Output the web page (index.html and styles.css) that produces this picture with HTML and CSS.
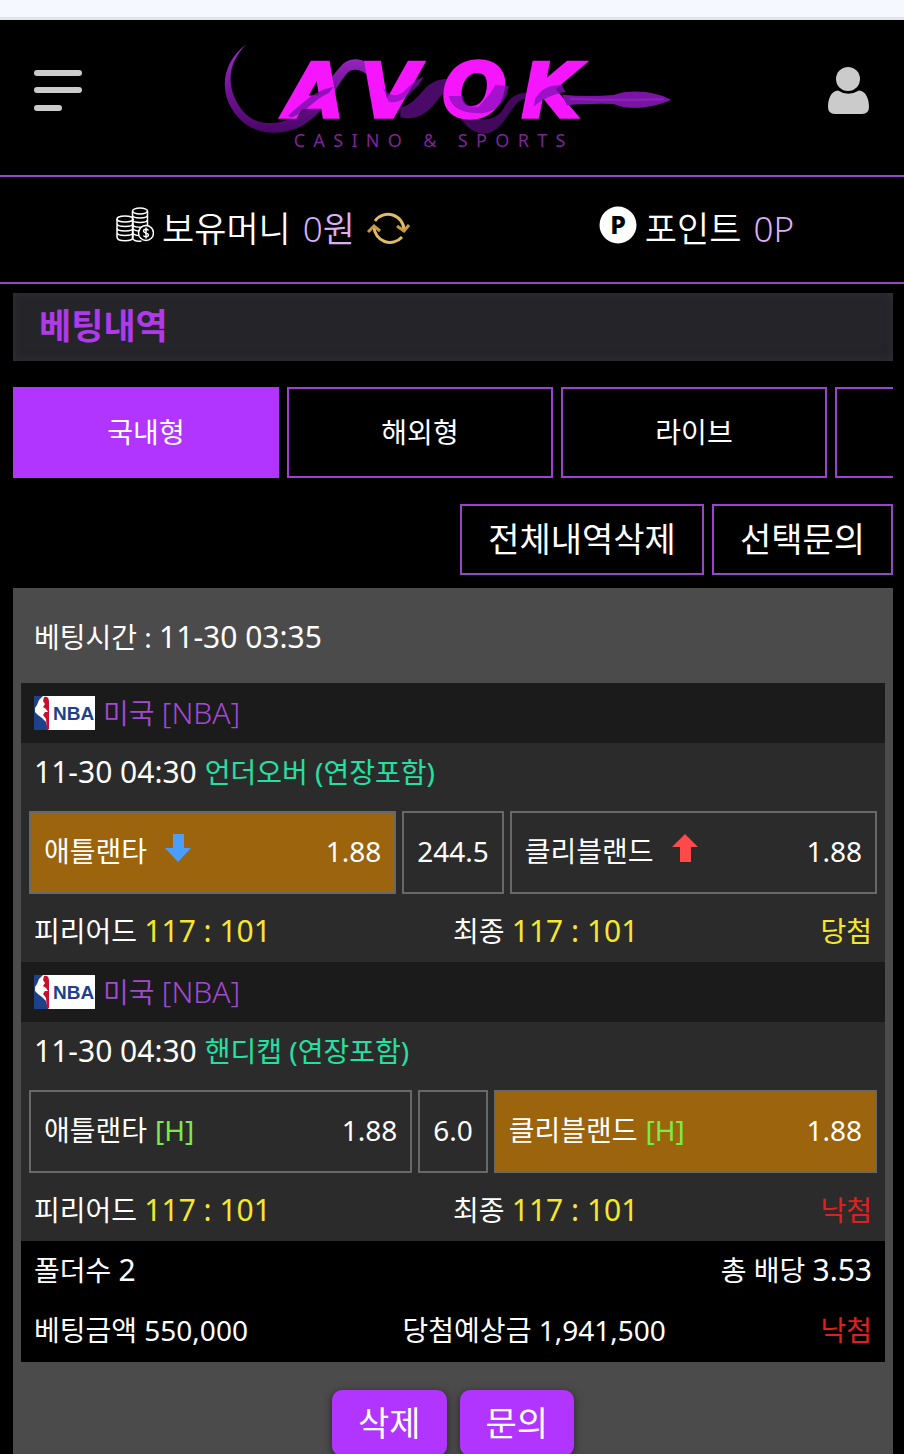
FILE: index.html
```html
<!DOCTYPE html>
<html lang="ko">
  <head>
    <meta charset="UTF-8" />
    <meta name="viewport" content="width=device-width, initial-scale=1.0" />
    <title>베팅내역</title>
    <link rel="stylesheet" href="styles.css">
  </head>
  <body>
    <div class="browser-edge"></div>
    <header>
      <button class="icon-btn" aria-label="메뉴">
        <svg width="48" height="42" viewBox="0 0 48 42" fill="#cbcbcb">
          <rect x="0" y="0" width="48" height="6" rx="3" />
          <rect x="0" y="17" width="48" height="6" rx="3" />
          <rect x="0" y="35" width="28" height="6" rx="3" />
        </svg>
      </button>
      <svg class="logo" width="500" height="141" viewBox="14 -30 1500 423">
        <defs>
          <linearGradient id="tail" x1="0" y1="0" x2="0" y2="1">
            <stop offset="0" stop-color="#a62cd0" />
            <stop offset="0.5" stop-color="#74149a" />
            <stop offset="1" stop-color="#4a0666" />
          </linearGradient>
        </defs>
        <path d="M138 43C60 100 55 195 110 258 155 312 230 322 300 290 370 255 400 180 440 130 460 110 490 120 520 150L515 110C490 85 455 80 430 100 380 150 350 220 290 258 220 292 160 285 125 240 75 175 80 100 138 43z" fill="url(#tail)" />
        <path d="M600 262C650 275 690 245 715 205 735 180 750 185 765 200L770 155C740 140 700 145 670 180 640 215 615 235 600 230z" fill="#4a0a68" />
        <path d="M780 262C800 300 840 320 870 308 910 290 925 245 950 220 965 205 980 205 1000 205V188C960 185 930 195 910 235 895 262 870 270 840 268z" fill="#42085c" />
        <text class="logo-text" y="262" x="256 480 726 964">AVOK</text>
        <path d="M262 258C310 215 345 180 400 170L385 190C345 205 320 245 275 262z" fill="#7c0fae" opacity="0.8" />
        <path d="M545 165C560 195 585 205 610 185 630 165 645 150 670 140L655 165C625 190 605 225 565 215z" fill="#8510b8" opacity="0.7" />
        <path d="M745 198L788 198C790 225 810 232 835 230L870 190 885 165 925 168C915 220 890 245 840 250 785 250 755 235 745 198z" fill="#8510b8" opacity="0.7" />
        <path d="M1005 205C1025 175 1045 165 1085 165L1095 185C1070 190 1025 205 1000 230z" fill="#8510b8" opacity="0.8" />
        <path d="M1085 194Q1160 202 1240 195C1290 175 1370 185 1412 209 1370 230 1290 245 1240 222Q1160 220 1100 226z" fill="#7a14a4" />
        <path d="M1110 206Q1240 212 1390 208" stroke="#9022bc" stroke-width="6" fill="none" />
        <text class="logo-sub" x="280" y="350">CASINO &amp; SPORTS</text>
      </svg>
      <button class="icon-btn" aria-label="내 정보">
        <svg width="41" height="48" viewBox="0 0 41 48" fill="#cbcbcb">
          <circle cx="20" cy="12" r="12" />
          <path d="M10 23.500Q20 30 31 23.500C38 24 41 32 41 40Q41 47 34 47H7Q0 47 0 40C0 32 3 24 10 23.500z" />
        </svg>
      </button>
    </header>

    <div class="wallet">
      <div class="wallet-item">
        <svg class="wallet-icon" width="38" height="36" viewBox="0 0 38 36" fill="none" stroke="#fff" stroke-width="1.500">
          <ellipse cx="9" cy="12" rx="8" ry="3" />
          <ellipse cx="24" cy="4" rx="7.500" ry="3" />
          <path d="M1 12v18c0 5 16 5 16 0V12M1 16.500c0 4 16 4 16 0M1 21c0 4 16 4 16 0M1 25.500c0 4 16 4 16 0" />
          <path d="M16.500 4v27c1 3 5 3.500 9 3M31.500 4v14M16.500 8c0 4 15 4 15 0M16.500 12.500c0 4 15 4 15 0M16.500 17c0 4 12 4 14 1M17 21.500c1 2 4 2.500 7 2.500M17 26c1 2 3 2.500 6 2.500" />
          <circle cx="30" cy="26" r="7.500" fill="#000" />
          <path d="M32.500 23.500c-1 -2 -5 -1.500 -5 0.500 0 2.500 5 1.500 5 4 0 2 -4 2.500 -5 0.500M30 20.500v11" />
        </svg>
        <span>보유머니</span>
        <span class="amount">0원</span>
        <button class="icon-btn" aria-label="새로고침">
          <svg width="43" height="36" viewBox="0 0 43 36" fill="none" stroke="#e0bb66" stroke-width="3">
            <path d="M8 10A16 16 0 0 1 37 19M35 26A16 16 0 0 1 7 16" />
            <path d="M30 15l7 5 5 -6M1 21l6 -6 6 5" stroke="#c99a3e" stroke-width="3" />
          </svg>
        </button>
      </div>
      <div class="wallet-item">
        <svg class="wallet-icon" width="38" height="38" viewBox="0 0 38 38">
          <circle cx="19" cy="19" r="18.500" fill="#fff" />
          <text x="19" y="28" class="point-text">P</text>
        </svg>
        <span>포인트</span>
        <span class="amount">0P</span>
      </div>
    </div>

    <main>
      <h1>베팅내역</h1>

      <div class="tabs">
        <button class="tab active">국내형</button>
        <button class="tab">해외형</button>
        <button class="tab">라이브</button>
        <button class="tab"></button>
      </div>

      <div class="actions">
        <button class="outline-btn">전체내역삭제</button>
        <button class="outline-btn">선택문의</button>
      </div>

      <section class="bet-card">
        <div class="bet-time">베팅시간 : <span class="num">11-30 03:35</span></div>

        <div class="game">
          <div class="league">
            <svg width="61" height="34" viewBox="0 0 61 34">
              <rect width="61" height="34" fill="#fff" />
              <path d="M0 0h9L5 4 3 9 1 12v4l3 3 4 3 4 4 2 8H0z" fill="#1d428a" />
              <path d="M10 1q5 -1 5 5v27q-1 1 -2 1l-1 -11 -3 -4 2 -3 3 0 -2 -3 -3 -2 2 -3 -2 -3z" fill="#c8102e" />
              <text x="19" y="24" class="nba-text">NBA</text>
            </svg>
            <span>미국 <span class="num">[NBA]</span></span>
          </div>
          <div class="row game-title">
            <span class="num">11-30 04:30</span>
            <span class="market">언더오버 (연장포함)</span>
          </div>
          <div class="odds">
            <button class="pick selected">
              <span class="team">애틀랜타
                <svg class="arrow" width="26" height="28" viewBox="0 0 26 28"><path d="M8 0h11v14h7L13 28 0 14h8z" fill="#4a9eff" /></svg>
              </span>
              <span>1.88</span>
            </button>
            <div class="line">244.5</div>
            <button class="pick">
              <span class="team">클리블랜드
                <svg class="arrow" width="26" height="28" viewBox="0 0 26 28"><path d="M13 0l13 13h-7v15H8V13H0z" fill="#ff4a4a" /></svg>
              </span>
              <span>1.88</span>
            </button>
          </div>
          <div class="row result">
            <span>피리어드 <span class="num score">117 : 101</span></span>
            <span>최종 <span class="num score">117 : 101</span></span>
            <span class="win">당첨</span>
          </div>
        </div>

        <div class="game">
          <div class="league">
            <svg width="61" height="34" viewBox="0 0 61 34">
              <rect width="61" height="34" fill="#fff" />
              <path d="M0 0h9L5 4 3 9 1 12v4l3 3 4 3 4 4 2 8H0z" fill="#1d428a" />
              <path d="M10 1q5 -1 5 5v27q-1 1 -2 1l-1 -11 -3 -4 2 -3 3 0 -2 -3 -3 -2 2 -3 -2 -3z" fill="#c8102e" />
              <text x="19" y="24" class="nba-text">NBA</text>
            </svg>
            <span>미국 <span class="num">[NBA]</span></span>
          </div>
          <div class="row game-title">
            <span class="num">11-30 04:30</span>
            <span class="market">핸디캡 (연장포함)</span>
          </div>
          <div class="odds">
            <button class="pick">
              <span class="team">애틀랜타 <span class="handicap">[H]</span></span>
              <span>1.88</span>
            </button>
            <div class="line">6.0</div>
            <button class="pick selected">
              <span class="team">클리블랜드 <span class="handicap">[H]</span></span>
              <span>1.88</span>
            </button>
          </div>
          <div class="row result">
            <span>피리어드 <span class="num score">117 : 101</span></span>
            <span>최종 <span class="num score">117 : 101</span></span>
            <span class="lose">낙첨</span>
          </div>
        </div>

        <div class="summary">
          <div class="row">
            <span>폴더수 <span class="num">2</span></span>
            <span>총 배당 <span class="num">3.53</span></span>
          </div>
          <div class="row">
            <span>베팅금액 550,000</span>
            <span>당첨예상금 1,941,500</span>
            <span class="lose">낙첨</span>
          </div>
        </div>

        <div class="card-actions">
          <button class="fill-btn">삭제</button>
          <button class="fill-btn">문의</button>
        </div>
      </section>
    </main>
  </body>
</html>
```
FILE: styles.css
```css
* {
  box-sizing: border-box;
}
body {
  margin: 0;
  height: 100vh;
  overflow: hidden;
  background-color: #000;
  color: #fff;
  font-family: "Noto Sans", "Noto Sans CJK KR", sans-serif;
  font-size: 28px;
  font-weight: 400;
  line-height: 38px;
}
button {
  font: inherit;
  color: inherit;
  padding: 0;
  border: none;
  background: none;
  cursor: pointer;
  white-space: nowrap;
}
svg {
  display: block;
  flex: none;
}
.browser-edge {
  height: 20px;
  background-color: #f5f9ff;
  border-bottom: 3px solid #dfe6e8;
}

/* header */
header {
  display: flex;
  justify-content: space-between;
  align-items: center;
  height: 157px;
  padding: 0 35px 14px 34px;
  border-bottom: 2px solid #9747c4;
}
.icon-btn {
  display: block;
}
.logo-text {
  font-family: "DejaVu Sans", sans-serif;
  font-size: 226px;
  font-weight: bold;
  font-style: italic;
  fill: #f516ff;
  stroke: #f516ff;
  stroke-width: 10px;
}
.logo-sub {
  font-family: "Noto Sans", sans-serif;
  font-size: 54px;
  font-weight: 400;
  letter-spacing: 25px;
  fill: #7d2499;
}

/* wallet bar */
.wallet {
  display: flex;
  justify-content: space-between;
  align-items: center;
  height: 107px;
  padding: 0 106px 2px 116px;
  border-bottom: 2px solid #9747c4;
  font-size: 35px;
  font-weight: 350;
}
.wallet-item {
  display: flex;
  align-items: center;
  gap: 8px;
}
.wallet-icon {
  margin-bottom: 8px;
}
.amount {
  margin: 0 4px;
  color: #dcaef5;
}
.point-text {
  font-family: "Noto Sans", sans-serif;
  font-size: 25px;
  font-weight: 800;
  text-anchor: middle;
}

/* content */
main {
  padding: 9px 11px 0 13px;
}
h1 {
  height: 68px;
  margin: 0 0 26px;
  padding: 0 26px;
  background-color: #252429;
  box-shadow: inset 0 0 10px #303036;
  color: #ae3aea;
  font-size: 35px;
  font-weight: 700;
  line-height: 66px;
}
.tabs {
  display: flex;
  gap: 8px;
  margin-bottom: 26px;
  overflow: hidden;
}
.tab {
  flex: 0 0 266px;
  height: 91px;
  padding-bottom: 2px;
  border: 2px solid #9f40d0;
}
.tab.active {
  background-color: #b135ff;
  border-color: #b135ff;
}
.actions {
  display: flex;
  justify-content: flex-end;
  gap: 8px;
  margin-bottom: 13px;
}
.outline-btn {
  height: 71px;
  padding: 0 26px 2px;
  border: 2px solid #9747c4;
  font-size: 34px;
}

/* bet card */
.bet-card {
  padding: 0 8px 20px;
  background-color: #4b4b4b;
}
.bet-time {
  height: 95px;
  padding: 30px 13px 0;
}
.num {
  font-size: 30px;
}
.game {
  background-color: #2b2b2b;
}
.league {
  display: flex;
  align-items: center;
  gap: 8px;
  height: 60px;
  padding: 0 13px;
  background-color: #1b1b1b;
  color: #a44ad2;
  font-weight: 350;
}
.nba-text {
  font-family: "Liberation Sans", sans-serif;
  font-size: 19px;
  font-weight: bold;
  fill: #1d428a;
}
.row {
  display: flex;
  justify-content: space-between;
  align-items: center;
  height: 60px;
  padding: 0 13px 2px;
}
.game-title {
  justify-content: flex-start;
  gap: 8px;
}
.market {
  color: #25e0a2;
}
.odds {
  display: flex;
  gap: 6px;
  padding: 8px;
}
.pick,
.line {
  display: flex;
  align-items: center;
  height: 83px;
  padding: 0 13px 4px;
  border: 2px solid #686868;
}
.pick {
  flex: 1;
  justify-content: space-between;
}
.pick.selected {
  background-color: #9b640d;
}
.team {
  display: flex;
  align-items: center;
  gap: 8px;
}
.arrow {
  margin: 0 10px 6px;
}
.handicap {
  color: #7bea4a;
}
.score,
.win {
  color: #f5e62e;
}
.lose {
  color: #e01f1f;
}
.summary {
  padding-bottom: 1px;
  background-color: #000;
}
.card-actions {
  display: flex;
  justify-content: center;
  gap: 13px;
  padding-top: 28px;
}
.fill-btn {
  height: 66px;
  padding: 0 26px;
  border-radius: 10px;
  background-color: #b135ff;
  box-shadow: 0 2px 8px rgba(0, 0, 0, 0.5);
  font-size: 34px;
}
```
